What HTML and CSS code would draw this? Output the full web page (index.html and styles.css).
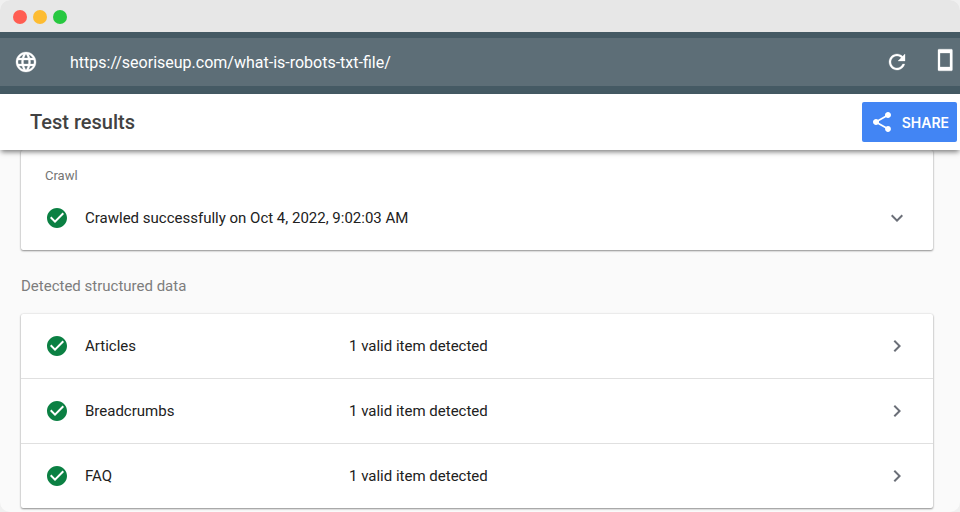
FILE: index.html
```html
<!DOCTYPE html>
<html lang="en">
<head>
    <meta charset="UTF-8">
    <meta name="viewport" content="width=device-width, initial-scale=1.0">
    <title>Test results</title>
    <link rel="stylesheet" href="styles.css">
</head>
<body>

<!-- shared icons -->
<svg class="sprite" aria-hidden="true">
    <symbol id="check" viewBox="0 0 24 24">
        <path d="M12 2C6.48 2 2 6.48 2 12s4.480 10 10 10 10-4.480 10-10S17.520 2 12 2zm-2 15l-5-5 1.410-1.410L10 14.170l7.590-7.590L19 8l-9 9z"/>
    </symbol>
    <symbol id="chevron" viewBox="0 0 24 24">
        <path d="M10 6L8.590 7.410 13.170 12l-4.580 4.590L10 18l6-6z"/>
    </symbol>
</svg>

<div class="window">
    <div class="titlebar">
        <span class="dot red"></span>
        <span class="dot yellow"></span>
        <span class="dot green"></span>
    </div>

    <form class="url-bar">
        <div class="url-field">
            <svg class="icon" viewBox="0 0 24 24" aria-hidden="true">
                <path d="M11.990 2C6.470 2 2 6.480 2 12s4.470 10 9.990 10C17.520 22 22 17.520 22 12S17.520 2 11.990 2zm6.930 6h-2.950c-.32-1.250-.78-2.450-1.380-3.560 1.840.63 3.370 1.910 4.330 3.560zM12 4.040c.83 1.200 1.480 2.530 1.910 3.960h-3.820c.43-1.430 1.080-2.760 1.910-3.960zM4.260 14C4.100 13.360 4 12.690 4 12s.1-1.360.26-2h3.380c-.08.66-.14 1.320-.14 2s.06 1.340.14 2H4.260zm.82 2h2.950c.32 1.250.78 2.450 1.380 3.560-1.840-.63-3.370-1.900-4.330-3.560zm2.950-8H5.080c.96-1.660 2.490-2.930 4.330-3.560C8.810 5.550 8.350 6.750 8.030 8zM12 19.960c-.83-1.200-1.480-2.530-1.910-3.960h3.820c-.43 1.430-1.080 2.760-1.910 3.960zM14.340 14H9.660c-.09-.66-.16-1.320-.16-2s.07-1.350.16-2h4.680c.09.65.16 1.320.16 2s-.07 1.340-.16 2zm.25 5.560c.6-1.110 1.060-2.310 1.380-3.560h2.950c-.96 1.650-2.490 2.930-4.330 3.560zM16.360 14c.08-.66.14-1.320.14-2s-.06-1.340-.14-2h3.380c.16.64.26 1.310.26 2s-.1 1.360-.26 2h-3.380z"/>
            </svg>
            <input type="text" class="url-input" aria-label="URL" value="https://seoriseup.com/what-is-robots-txt-file/">
            <button type="button" class="icon-button" aria-label="Run test again">
                <svg class="icon" viewBox="0 0 24 24" aria-hidden="true">
                    <path d="M17.650 6.350C16.200 4.900 14.210 4 12 4c-4.420 0-7.990 3.580-7.990 8s3.570 8 7.990 8c3.730 0 6.840-2.550 7.730-6h-2.080c-.82 2.330-3.040 4-5.650 4-3.310 0-6-2.690-6-6s2.690-6 6-6c1.660 0 3.140.69 4.220 1.780L13 11h7V4l-2.350 2.350z"/>
                </svg>
            </button>
            <button type="button" class="icon-button" aria-label="Smartphone">
                <svg class="icon" viewBox="0 0 24 24" aria-hidden="true">
                    <path d="M18.200-.8H6.200C5.300-.8 5-.5 5 .4v19.200c0 .9.3 1.200 1.200 1.200h12c.9 0 1.200-.3 1.200-1.200V.4C19.400-.5 19.100-.8 18.200-.8zM17 17H7V3h10v14z"/>
                </svg>
            </button>
        </div>
    </form>

    <header class="header">
        <h1>Test results</h1>
        <button type="button" class="share">
            <svg class="icon" viewBox="0 0 24 24" aria-hidden="true">
                <path d="M18 16.080c-.76 0-1.440.3-1.960.77L8.910 12.700c.05-.23.09-.46.09-.7s-.04-.47-.09-.7l7.050-4.110c.54.5 1.250.81 2.040.81 1.660 0 3-1.340 3-3s-1.340-3-3-3-3 1.340-3 3c0 .24.04.47.09.7L8.040 9.810C7.500 9.310 6.790 9 6 9c-1.660 0-3 1.340-3 3s1.340 3 3 3c.79 0 1.500-.31 2.040-.81l7.120 4.160c-.05.21-.08.43-.08.65 0 1.610 1.310 2.920 2.920 2.920s2.920-1.310 2.920-2.920-1.310-2.920-2.920-2.920z"/>
            </svg>
            SHARE
        </button>
    </header>

    <main class="content">
        <section class="card crawl">
            <h2>Crawl</h2>
            <button type="button" class="row">
                <svg class="icon check"><use href="#check"/></svg>
                <span>Crawled successfully on Oct 4, 2022, 9:02:03 AM</span>
                <svg class="icon chevron down"><use href="#chevron"/></svg>
            </button>
        </section>

        <h2 class="section-title">Detected structured data</h2>

        <nav class="card items">
            <a class="row" href="#articles">
                <svg class="icon check"><use href="#check"/></svg>
                <span class="name">Articles</span>
                <span>1 valid item detected</span>
                <svg class="icon chevron"><use href="#chevron"/></svg>
            </a>
            <a class="row" href="#breadcrumbs">
                <svg class="icon check"><use href="#check"/></svg>
                <span class="name">Breadcrumbs</span>
                <span>1 valid item detected</span>
                <svg class="icon chevron"><use href="#chevron"/></svg>
            </a>
            <a class="row" href="#faq">
                <svg class="icon check"><use href="#check"/></svg>
                <span class="name">FAQ</span>
                <span>1 valid item detected</span>
                <svg class="icon chevron"><use href="#chevron"/></svg>
            </a>
        </nav>
    </main>
</div>

</body>
</html>
```
FILE: styles.css
```css
* {
    box-sizing: border-box;
}
body {
    margin: 0;
    background: #f0f0f0;
    font-family: Roboto, Arial, sans-serif;
    font-size: 15px;
    color: #212121;
}
h1, h2 {
    margin: 0;
}
button, input {
    font-family: inherit;
    border: none;
    background: none;
    padding: 0;
}
button {
    cursor: pointer;
}
.sprite {
    display: none;
}
.icon {
    display: block;
    flex: none;
    width: 24px;
    height: 24px;
    fill: currentColor;
}
.window {
    min-height: 100vh;
    background: #fafafa;
    border-radius: 10px;
    overflow: hidden;
}
.titlebar {
    display: flex;
    align-items: center;
    gap: 6px;
    height: 32px;
    padding: 2px 13px 0;
    background: #e7e7e7;
}
.dot {
    width: 14px;
    height: 14px;
    border-radius: 50%;
}
.red {
    background: #ff5d52;
}
.yellow {
    background: #fdbc31;
}
.green {
    background: #27c840;
}
.url-bar {
    padding: 6px 0 8px;
    background: #455a64;
}
.url-field {
    display: flex;
    align-items: center;
    gap: 24px;
    height: 48px;
    padding: 0 3px 0 14px;
    background: #5d6e77;
    color: #fff;
}
.url-field .icon {
    overflow: visible;
    stroke: currentColor;
    stroke-width: 0.3;
}
.url-input {
    flex: 1;
    min-width: 0;
    height: 46px;
    padding-left: 8px;
    font-size: 16px;
    color: #fff;
    outline: none;
}
.icon-button {
    color: #fff;
}
.header {
    position: relative;
    display: flex;
    align-items: center;
    justify-content: space-between;
    height: 56px;
    padding: 0 3px 0 30px;
    background: #fff;
    box-shadow: 0 3px 5px -1px rgba(0, 0, 0, 0.5);
}
.header h1 {
    font-size: 20px;
    font-weight: 500;
    color: #424242;
}
.share {
    display: flex;
    align-items: center;
    gap: 8px;
    height: 40px;
    padding: 0 8px;
    border-radius: 2px;
    background: #4285f4;
    color: #fff;
    font-family: Inter, Roboto, sans-serif;
    font-size: 14px;
    font-weight: 600;
}
.content {
    padding: 0 27px 4px 21px;
}
.card {
    background: #fff;
    border-radius: 2px;
    box-shadow: 0 1px 2px rgba(0, 0, 0, 0.4), 0 0 2px rgba(0, 0, 0, 0.15);
}
.crawl {
    padding: 16px 0 0;
}
.crawl h2 {
    padding-left: 24px;
    font-size: 13px;
    line-height: 20px;
    font-weight: 400;
    color: #757575;
}
.row {
    display: flex;
    align-items: center;
    width: 100%;
    height: 64px;
    padding: 0 24px;
    font-size: 15px;
    color: #212121;
    text-align: left;
    text-decoration: none;
}
.check {
    margin-right: 16px;
    color: #0b8043;
}
.name {
    width: 264px;
}
.chevron {
    margin-left: auto;
    color: #6b6f78;
}
.down {
    transform: rotate(90deg);
}
.section-title {
    padding: 24px 0 16px;
    font-size: 15px;
    line-height: 24px;
    font-weight: 400;
    color: #7d7d7d;
}
.items .row + .row {
    height: 65px;
    border-top: 1px solid #e0e0e0;
}
```
